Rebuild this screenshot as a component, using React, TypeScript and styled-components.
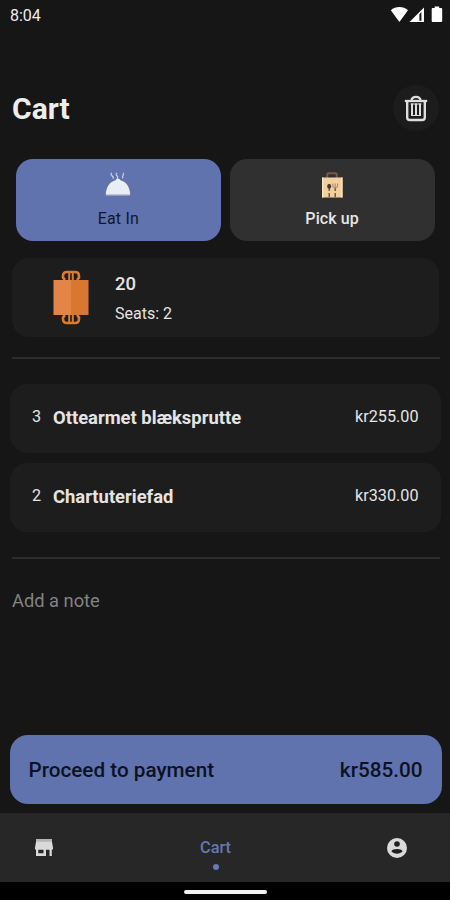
import React from "react";
import styled, { createGlobalStyle } from "styled-components";

const GlobalStyle = createGlobalStyle`
  * { box-sizing: border-box; }
  body { margin: 0; background: #161616; font-family: Roboto, sans-serif; }
  button { font: inherit; border: 0; padding: 0; margin: 0; }
  svg { display: block; flex: none; }
`;

const Screen = styled.div`
  width: 450px;
  height: 900px;
  display: flex;
  flex-direction: column;
  overflow: hidden;
  background: #161616;
  color: #e4e4e4;
`;

const StatusBar = styled.div`
  height: 30px;
  padding: 0 7px 0 10px;
  display: flex;
  align-items: center;
  justify-content: space-between;
  font-size: 16px;
  line-height: 30px;
  color: #ececec;
`;

const Clock = styled.span`
  padding-top: 1px;
`;

const Header = styled.header`
  margin-top: 54.5px;
  height: 46px;
  padding: 0 11px 0 12px;
  display: flex;
  align-items: center;
  justify-content: space-between;
`;

const Title = styled.h1`
  margin: 0;
  padding-top: 2px;
  font-size: 30px;
  line-height: 46px;
  font-weight: 700;
  color: #ededed;
`;

const ClearButton = styled.button`
  width: 46px;
  height: 46px;
  border-radius: 50%;
  display: grid;
  place-items: center;
  background: #1c1c1c;
`;

const Modes = styled.div`
  margin: 28px 15.5px 0 16px;
  display: grid;
  grid-template-columns: 1fr 1fr;
  gap: 9px;
`;

const ModeButton = styled.button<{ $active?: boolean }>`
  height: 82.5px;
  padding-top: 13px;
  border-radius: 17px;
  display: flex;
  flex-direction: column;
  align-items: center;
  gap: 9px;
  font-size: 16px;
  line-height: 24px;
  font-weight: ${(p) => (p.$active ? 400 : 500)};
  letter-spacing: ${(p) => (p.$active ? "0.2px" : "0.1px")};
  color: ${(p) => (p.$active ? "#10172a" : "#e6e6e6")};
  background: ${(p) => (p.$active ? "#6173ae" : "#303030")};
`;

const TableCard = styled.section`
  margin: 16.5px 11px 0 12px;
  height: 79.5px;
  padding-left: 40px;
  border-radius: 17px;
  display: flex;
  align-items: center;
  gap: 25px;
  background: #1d1d1d;
`;

const TableInfo = styled.div`
  padding-top: 3px;
`;

const TableNumber = styled.div`
  font-size: 18.5px;
  line-height: 29px;
  font-weight: 500;
`;

const Seats = styled.div`
  font-size: 16px;
  line-height: 29px;
`;

const Divider = styled.hr<{ $top: number }>`
  flex: none;
  width: 428px;
  height: 2px;
  margin: ${(p) => p.$top}px 0 0 12px;
  border: 0;
  background: #2d2d2d;
`;

const Items = styled.ul`
  list-style: none;
  margin: 25px 9px 0 10px;
  padding: 0;
  display: flex;
  flex-direction: column;
  gap: 9.5px;
`;

const Item = styled.li`
  height: 69px;
  padding: 0 22.5px 0 22px;
  border-radius: 17px;
  display: flex;
  background: #1d1d1d;
  font-size: 16.2px;
  line-height: 65px;
`;

const Quantity = styled.span`
  width: 21px;
`;

const ItemName = styled.span`
  flex: 1;
  font-size: 18.4px;
  line-height: 67px;
  font-weight: 700;
`;

const Note = styled.div`
  margin: 29px 12px 0;
  font-size: 18.3px;
  line-height: 25px;
  color: #838383;
`;

const PayButton = styled.button`
  flex: none;
  height: 69px;
  margin: auto 8.5px 9px 9.5px;
  padding: 1px 19px 0;
  border-radius: 18px;
  display: flex;
  align-items: center;
  justify-content: space-between;
  font-size: 20.7px;
  line-height: 69px;
  font-weight: 500;
  color: #0c1222;
  background: #6173ae;
`;

const NavBar = styled.nav`
  flex: none;
  height: 69px;
  padding: 0 42px 0 34px;
  display: grid;
  grid-template-columns: 20px 1fr 22px;
  align-items: center;
  background: #272727;
`;

const ActiveTab = styled.div`
  padding: 11px 9px 0 0;
  display: flex;
  flex-direction: column;
  align-items: center;
  gap: 4px;
  font-size: 16.3px;
  line-height: 24px;
  font-weight: 500;
  color: #6577b4;
`;

const Dot = styled.span`
  width: 6px;
  height: 6px;
  border-radius: 50%;
  background: #6879b5;
`;

const GestureArea = styled.div`
  flex: none;
  height: 18px;
  padding: 7.5px 0 0 184px;
  background: #000;
`;

const GestureHandle = styled.div`
  width: 83px;
  height: 4px;
  border-radius: 2px;
  background: #f0f0f0;
`;

const StatusIcons = () => (
  <svg width="53" height="18" viewBox="0 0 53 18">
    <path d="M.8 4.2C5.7-.1 13.2-.1 18 4.2L9.4 16z" fill="#fff" />
    <path d="M19.5 16 34 1.5V16z" fill="#fff" />
    <path d="M29.4 8.5v6.2h2V5.8" fill="#161616" />
    <path d="M42.7 2h2V.5h4.5V2h2q1 0 1 1v12q0 1-1 1h-8.5q-1 0-1-1V3q0-1 1-1z" fill="#fff" />
  </svg>
);

const TrashIcon = () => (
  <svg width="24" height="28" viewBox="0 0 24 28" fill="none" stroke="#dedede" strokeLinejoin="round">
    <path d="M.8 7h22.4" strokeWidth="2.3" />
    <path d="M7.5 6.5C7.5 1.6 16.5 1.6 16.5 6.5" strokeWidth="2.2" />
    <path d="M3.2 7v16.5q0 2.5 2.5 2.5h12.6q2.5 0 2.5-2.5V7" strokeWidth="2.4" />
    <path d="M8 9.5v12M12 9.5v12M16 9.5v12" strokeWidth="2" />
    <path d="M6.5 10h11M7 21.5h10" strokeWidth="1" />
  </svg>
);

const ClocheIcon = () => (
  <svg width="26" height="26" viewBox="0 0 26 26">
    <path d="M7 1q-2 1 0 2.7t1 3M12 1q-1.5 1.4 0 2.7t0 3M18 1q1 1.4 0 2.7t0 2.7" stroke="#c5cce3" strokeWidth="1.3" fill="none" />
    <path d="M.8 22.8C1 15 5 9.4 10.6 8.2q.4-1.4 2.4-1.4t2.4 1.4C21 9.4 25 15 25.2 22.8z" fill="#e9edf5" />
    <path d="M1.2 23.2h23.6" stroke="#a3aecd" strokeWidth="1" />
  </svg>
);

const BagIcon = () => (
  <svg width="26" height="26" viewBox="0 0 26 26">
    <path d="M8.2 6V3q0-1.8 1.8-1.8h6q1.8 0 1.8 1.8v3" fill="none" stroke="#74584c" strokeWidth="2" />
    <path d="M3 5.5h20.5v20H3z" fill="#f2cf9e" />
    <path d="M3 5.5h1.5v20H3zM22 5.5h1.5v20H22z" fill="#fbe3bd" />
    <ellipse cx="10.2" cy="14.3" rx="2" ry="2.6" fill="#493c36" />
    <path d="M10.2 16v3M10.2 21v4M16.2 16v3M16.2 21v4" stroke="#5b493e" strokeWidth="1.3" />
    <path d="M13.9 11.5v2.5q0 2 2.3 2t2.3-2v-2.5M16.2 11.5V16" fill="none" stroke="#a88764" strokeWidth="1" />
  </svg>
);

const TableIcon = () => (
  <svg width="38" height="55" viewBox="0 0 38 55">
    <g fill="none" stroke="#dc7b2f" strokeWidth="2.6">
      <path d="M12.2 10.5V8.8L11 7.6V6q0-4 4-4h8q4 0 4 4v1.6l-1.2 1.2v1.7" />
      <path d="M12.2 44.5v1.7L11 47.4V49q0 4 4 4h8q4 0 4-4v-1.6l-1.2-1.2v-1.7" />
      <path d="M17.2 10V3M20.8 10V3M17.2 45v7M20.8 45v7" strokeWidth="2" />
    </g>
    <path d="M1.5 10H19v35H1.5z" fill="#e38645" />
    <path d="M19 10h17.5v35H19z" fill="#d97630" />
  </svg>
);

const StoreIcon = () => (
  <svg width="20" height="20" viewBox="0 0 20 20">
    <path d="M2 1h16v3H2z" fill="#b4b4b4" />
    <path d="M2 3.8h16l1 6v1.7h-1.2V18h-2.3v-6.3H12V18H2v-6.5H1V9.8zM4.3 11.7v3.6h5.2v-3.6z" fill="#dadada" fillRule="evenodd" />
  </svg>
);

const AccountIcon = () => (
  <svg width="22" height="22" viewBox="0 0 22 22">
    <circle cx="11" cy="11" r="10" fill="#dadada" />
    <circle cx="11" cy="7" r="2.8" fill="#202020" />
    <path d="M5.4 14.2c1-2.8 10.2-2.8 11.2 0-2.4 3.3-8.8 3.3-11.2 0z" fill="#202020" />
  </svg>
);

const items = [
  { quantity: 3, name: "Ottearmet blæksprutte", price: "kr255.00" },
  { quantity: 2, name: "Chartuteriefad", price: "kr330.00" },
];

export default function App() {
  return (
    <>
      <GlobalStyle />
      <Screen>
        <StatusBar>
          <Clock>8:04</Clock>
          <StatusIcons />
        </StatusBar>
        <Header>
          <Title>Cart</Title>
          <ClearButton aria-label="Empty cart">
            <TrashIcon />
          </ClearButton>
        </Header>
        <Modes>
          <ModeButton $active>
            <ClocheIcon />
            Eat In
          </ModeButton>
          <ModeButton>
            <BagIcon />
            Pick up
          </ModeButton>
        </Modes>
        <TableCard>
          <TableIcon />
          <TableInfo>
            <TableNumber>20</TableNumber>
            <Seats>Seats: 2</Seats>
          </TableInfo>
        </TableCard>
        <Divider $top={20} />
        <Items>
          {items.map((item) => (
            <Item key={item.name}>
              <Quantity>{item.quantity}</Quantity>
              <ItemName>{item.name}</ItemName>
              <span>{item.price}</span>
            </Item>
          ))}
        </Items>
        <Divider $top={25} />
        <Note>Add a note</Note>
        <PayButton>
          <span>Proceed to payment</span>
          <span>kr585.00</span>
        </PayButton>
        <NavBar>
          <StoreIcon />
          <ActiveTab>
            Cart
            <Dot />
          </ActiveTab>
          <AccountIcon />
        </NavBar>
        <GestureArea>
          <GestureHandle />
        </GestureArea>
      </Screen>
    </>
  );
}
